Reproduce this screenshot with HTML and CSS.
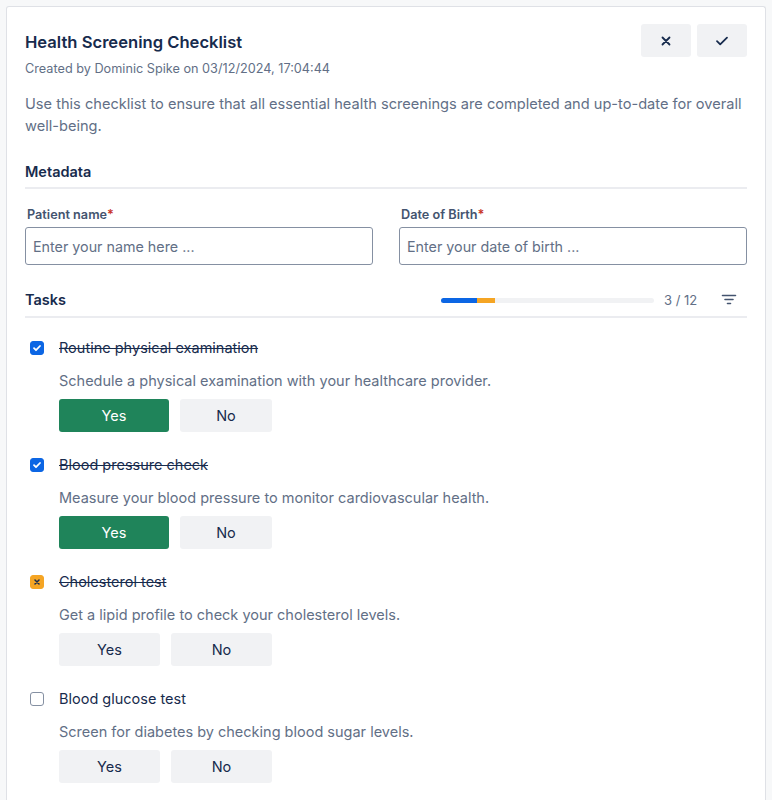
FILE: index.html
```html
<!DOCTYPE html>
<html>
<head>
<meta charset="utf-8">
<link rel="stylesheet" href="styles.css">
</head>
<body>
<div class="card">
  <div class="header">
    <div class="head-text">
      <h1 class="title">Health Screening Checklist</h1>
      <div class="meta">Created by Dominic Spike on 03/12/2024, 17:04:44</div>
    </div>
    <div class="head-actions">
      <button class="icon-btn" aria-label="Close">
        <svg width="12" height="12" viewBox="0 0 12 12"><path d="M2.5 2.5l7 7M9.5 2.5l-7 7" stroke="#172b4d" stroke-width="1.8" stroke-linecap="round" fill="none"/></svg>
      </button>
      <button class="icon-btn" aria-label="Save">
        <svg width="14" height="12" viewBox="0 0 14 12"><path d="M2 6.2l3.2 3.1L12 2.6" stroke="#172b4d" stroke-width="1.8" stroke-linecap="round" stroke-linejoin="round" fill="none"/></svg>
      </button>
    </div>
  </div>
  <p class="desc">Use this checklist to ensure that all essential health screenings are completed and up-to-date for overall well-being.</p>

  <div class="section-head"><span class="section-title">Metadata</span></div>
  <div class="fields">
    <label class="field">
      <span class="label">Patient name<span class="req">*</span></span>
      <input class="input" placeholder="Enter your name here ...">
    </label>
    <label class="field">
      <span class="label">Date of Birth<span class="req">*</span></span>
      <input class="input" placeholder="Enter your date of birth ...">
    </label>
  </div>

  <div class="section-head tasks-head">
    <span class="section-title">Tasks</span>
    <div class="progress-wrap">
      <div class="progress"><span class="seg blue" style="width:36px"></span><span class="seg orange" style="width:18px"></span></div>
      <span class="count">3 / 12</span>
      <svg class="filter" width="16" height="14" viewBox="0 0 16 14"><path d="M1.5 2.5h13M4 6.5h8M6.5 10.5h3" stroke="#44546f" stroke-width="1.6" stroke-linecap="round"/></svg>
    </div>
  </div>

  <div class="tasks">
    <div class="task">
      <div class="task-row">
        <span class="cb checked"><svg width="10" height="10" viewBox="0 0 10 10"><path d="M2 5.2l2 2L8 3" stroke="#fff" stroke-width="1.8" fill="none" stroke-linecap="round" stroke-linejoin="round"/></svg></span>
        <span class="task-title done">Routine physical examination</span>
      </div>
      <div class="task-desc">Schedule a physical examination with your healthcare provider.</div>
      <div class="btns"><button class="btn yes active wide">Yes</button><button class="btn wide2">No</button></div>
    </div>
    <div class="task">
      <div class="task-row">
        <span class="cb checked"><svg width="10" height="10" viewBox="0 0 10 10"><path d="M2 5.2l2 2L8 3" stroke="#fff" stroke-width="1.8" fill="none" stroke-linecap="round" stroke-linejoin="round"/></svg></span>
        <span class="task-title done">Blood pressure check</span>
      </div>
      <div class="task-desc">Measure your blood pressure to monitor cardiovascular health.</div>
      <div class="btns"><button class="btn yes active wide">Yes</button><button class="btn wide2">No</button></div>
    </div>
    <div class="task">
      <div class="task-row">
        <span class="cb skipped"><svg width="8" height="8" viewBox="0 0 8 8"><path d="M2 2l4 4M6 2l-4 4" stroke="#172b4d" stroke-width="1.5" stroke-linecap="round"/></svg></span>
        <span class="task-title done">Cholesterol test</span>
      </div>
      <div class="task-desc">Get a lipid profile to check your cholesterol levels.</div>
      <div class="btns"><button class="btn">Yes</button><button class="btn">No</button></div>
    </div>
    <div class="task">
      <div class="task-row">
        <span class="cb"></span>
        <span class="task-title">Blood glucose test</span>
      </div>
      <div class="task-desc">Screen for diabetes by checking blood sugar levels.</div>
      <div class="btns"><button class="btn">Yes</button><button class="btn">No</button></div>
    </div>
  </div>
</div>
</body>
</html>
```
FILE: styles.css
```css
* { box-sizing: border-box; }
html, body { margin: 0; padding: 0; }
body {
  background: #f7f8f9;
  font-family: Inter, "Liberation Sans", sans-serif;
  color: #172b4d;
  padding: 6px 6px 0 6px;
}
.card {
  background: #fff;
  border: 1px solid #dfe1e6;
  border-bottom: none;
  border-radius: 3px 3px 0 0;
  padding: 17px 18px 20px 18px;
  width: 760px;
  height: 794px;
  overflow: hidden;
}
.header {
  display: flex;
  justify-content: space-between;
  align-items: flex-start;
}
.title {
  margin: 8px 0 0 0;
  font-size: 16.6px;
  font-weight: 600;
  line-height: 20px;
  color: #172b4d;
}
.meta {
  margin-top: 9px;
  font-size: 12.7px;
  color: #626f86;
  line-height: 16px;
}
.head-actions { display: flex; gap: 6px; }
.icon-btn {
  width: 50px;
  height: 33px;
  border: none;
  border-radius: 3px;
  background: #f1f2f4;
  display: flex;
  align-items: center;
  justify-content: center;
  padding: 0;
}
.desc {
  margin: 16px 0 0 0;
  font-size: 14.6px;
  line-height: 22px;
  color: #626f86;
}
.section-head {
  margin-top: 25px;
  border-bottom: 2px solid #ebecf0;
  padding-bottom: 5px;
  display: flex;
  align-items: center;
  justify-content: space-between;
}
.section-title {
  font-size: 14.5px;
  font-weight: 600;
  color: #172b4d;
  line-height: 20px;
}
.fields {
  display: grid;
  grid-template-columns: 1fr 1fr;
  gap: 26px;
  margin-top: 18px;
}
.field { display: flex; flex-direction: column; }
.label {
  font-size: 12.7px;
  font-weight: 600;
  color: #44546f;
  line-height: 16px;
  padding-left: 2px;
}
.req { color: #c9372c; }
.input {
  margin-top: 4px;
  height: 38px;
  border: 1px solid #8590a2;
  border-radius: 3px;
  padding: 0 7px;
  font-family: inherit;
  font-size: 14.3px;
  color: #172b4d;
  outline: none;
}
.input::placeholder { color: #626f86; }
.tasks-head { margin-top: 25px; padding-bottom: 6px; }
.progress-wrap { display: flex; align-items: center; }
.progress {
  width: 213px;
  height: 5px;
  background: #f1f2f4;
  border-radius: 3px;
  display: flex;
  overflow: hidden;
}
.seg { display: block; height: 100%; }
.blue { background: #0c66e4; }
.orange { background: #f5a524; }
.count {
  margin-left: 10px;
  font-size: 13px;
  color: #626f86;
  width: 42px;
}
.filter { margin-left: 15px; margin-right: 10px; }
.tasks { padding-top: 20px; }
.task { padding-left: 5px; height: 117px; }
.task-row { display: flex; align-items: center; height: 20px; }
.cb {
  width: 14px;
  height: 14px;
  border: 1.5px solid #8590a2;
  border-radius: 3px;
  display: flex;
  align-items: center;
  justify-content: center;
  flex: none;
}
.cb.checked { background: #0c66e4; border-color: #0c66e4; }
.cb.skipped { background: #f5a524; border-color: #f5a524; }
.task-title {
  margin-left: 15px;
  font-size: 14.5px;
  color: #172b4d;
  line-height: 20px;
}
.task-title.done { text-decoration: line-through; }
.task-desc {
  margin: 13px 0 0 29px;
  font-size: 14.5px;
  color: #626f86;
  line-height: 20px;
}
.btns {
  display: flex;
  gap: 11px;
  margin: 8px 0 0 29px;
}
.btn {
  width: 101px;
  height: 33px;
  border: none;
  border-radius: 3px;
  background: #f1f2f4;
  font-family: inherit;
  font-size: 14.5px;
  color: #172b4d;
  padding: 0;
}
.btn.wide { width: 110px; }
.btn.wide2 { width: 92px; }
.btn.active { background: #1f845a; color: #fff; }
```
